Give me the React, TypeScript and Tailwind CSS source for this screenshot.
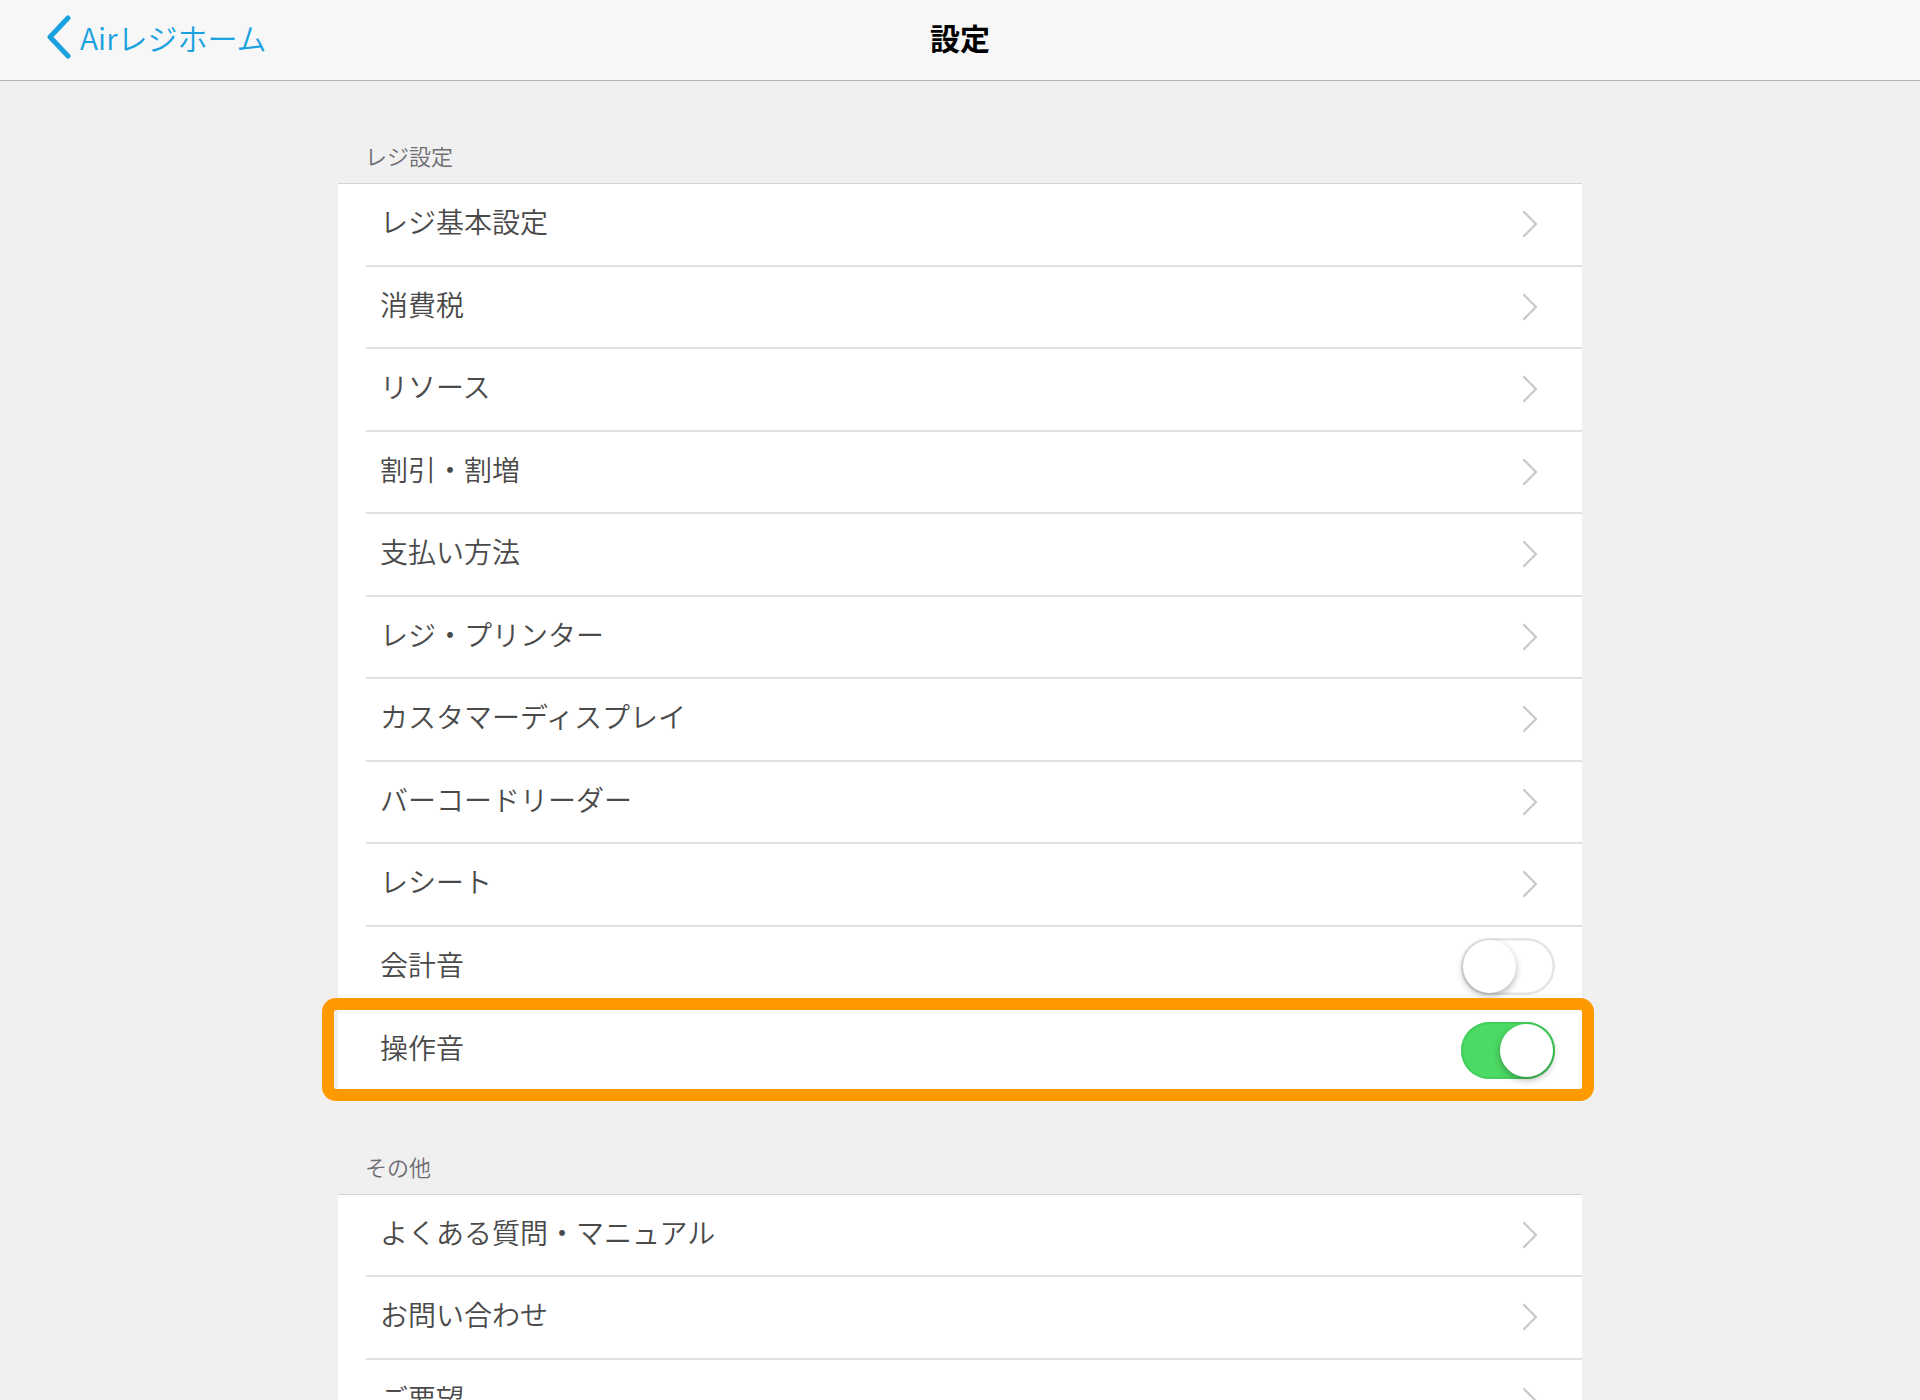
import React from "react"

const font = { fontFamily: '"Noto Sans CJK JP", "Noto Sans", sans-serif' }

type Row = { label: string; kind?: "link" | "off" | "on"; highlight?: boolean }

const regiRows: Row[] = [
  { label: "レジ基本設定" },
  { label: "消費税" },
  { label: "リソース" },
  { label: "割引・割増" },
  { label: "支払い方法" },
  { label: "レジ・プリンター" },
  { label: "カスタマーディスプレイ" },
  { label: "バーコードリーダー" },
  { label: "レシート" },
  { label: "会計音", kind: "off" },
  { label: "操作音", kind: "on", highlight: true },
]

const otherRows: Row[] = [
  { label: "よくある質問・マニュアル" },
  { label: "お問い合わせ" },
  { label: "ご要望" },
]

function Chevron() {
  return (
    <svg width="16" height="28" viewBox="0 0 16 28" fill="none">
      <polyline points="2,2 14,14 2,26" stroke="#c7c7cc" strokeWidth="2.2" strokeLinecap="round" strokeLinejoin="round" />
    </svg>
  )
}

function Toggle({ on }: { on: boolean }) {
  return (
    <div
      className={
        on
          ? "relative w-[94px] h-[57px] rounded-full bg-[#4cd964] shadow-[inset_0_0_0_2px_#44cf5c]"
          : "relative w-[94px] h-[57px] rounded-full bg-white shadow-[inset_0_0_0_2.5px_#e5e5e5]"
      }
    >
      <div
        className={
          on
            ? "absolute top-[2px] right-[2px] w-[53px] h-[53px] rounded-full bg-white shadow-[0_3px_7px_rgba(0,0,0,0.3)]"
            : "absolute top-[2px] left-[2px] w-[53px] h-[53px] rounded-full bg-white shadow-[0_3px_7px_rgba(0,0,0,0.3)]"
        }
      />
    </div>
  )
}

function SettingRow({ row, last }: { row: Row; last: boolean }) {
  return (
    <div className="relative h-[82.5px]">
      <div
        className={
          last
            ? "ml-[28px] h-full flex items-center justify-between pl-[14px] pr-[27px]"
            : "ml-[28px] h-full flex items-center justify-between pl-[14px] pr-[27px] border-b-2 border-[#e0e0e0]"
        }
      >
        <span className="mb-[6px] text-[28px] font-[350] text-[#4a4a4a] leading-none">{row.label}</span>
        {row.kind === "off" && <Toggle on={false} />}
        {row.kind === "on" && <Toggle on={true} />}
        {!row.kind && (
          <div className="mr-[17px] flex items-center">
            <Chevron />
          </div>
        )}
      </div>
      {row.highlight && (
        <div className="absolute -left-[16px] -right-[12px] -top-[11px] -bottom-[9px] border-[12px] border-[#ff9900] rounded-[14px] pointer-events-none" />
      )}
    </div>
  )
}

function Section({ title, rows, top }: { title: string; rows: Row[]; top: string }) {
  return (
    <div>
      <div className={`${top} pb-[11px] pl-[27px] text-[22px] leading-[33px] font-[350] text-[#6d6d72]`}>{title}</div>
      <div className="bg-white border-t border-[#d4d4d4]">
        {rows.map((r, i) => (
          <SettingRow key={r.label} row={r} last={i === rows.length - 1} />
        ))}
      </div>
    </div>
  )
}

export default function App() {
  return (
    <div className="w-[1920px] h-[1400px] overflow-hidden bg-[#f0f0f0]" style={font}>
      {/* nav bar */}
      <div className="h-[81px] pb-[6px] bg-[#f7f7f7] border-b border-[#b2b2b2] grid grid-cols-[1fr_auto_1fr] items-center">
        <div className="flex items-center pl-[46px]">
          <svg width="26" height="44" viewBox="0 0 26 44" fill="none">
            <polyline points="22,3 4,22 22,41" stroke="#1aa1df" strokeWidth="5" strokeLinecap="round" strokeLinejoin="round" />
          </svg>
          <span className="ml-[8px] text-[30px] font-[350] text-[#1aa1df] leading-none">Airレジホーム</span>
        </div>
        <div className="text-[30px] font-bold text-black leading-none">設定</div>
        <div />
      </div>

      <div className="w-[1244px] mx-auto">
        <Section title="レジ設定" rows={regiRows} top="pt-[58px]" />
        <Section title="その他" rows={otherRows} top="pt-[58px]" />
      </div>
    </div>
  )
}
